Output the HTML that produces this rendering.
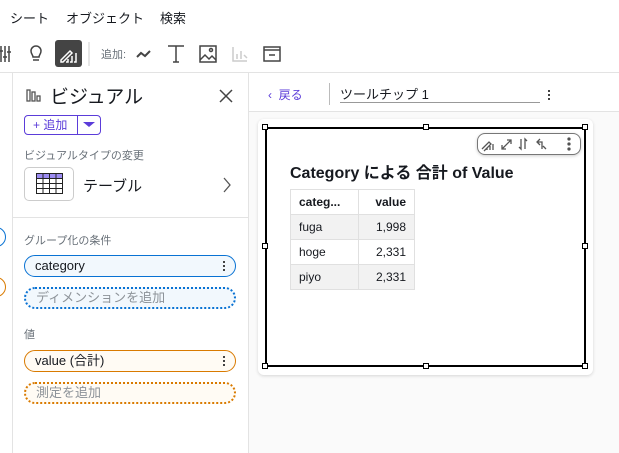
<!DOCTYPE html>
<html><head><meta charset="utf-8"><style>
*{box-sizing:border-box;margin:0;padding:0}
body{width:619px;height:453px;overflow:hidden;background:#fff;font-family:"Liberation Sans","Noto Sans CJK JP",sans-serif;color:#16191f;position:relative}
.a{position:absolute}
.menu{font-size:13px;top:8px}
.lbl{font-size:11px;color:#687078}
.pill{position:absolute;left:24px;width:212px;height:22px;border-radius:11px;font-size:13px;padding-left:10px;line-height:20px}
.k{position:absolute;right:10px;top:4px;width:2px;height:12px;background:radial-gradient(circle,#333 1px,transparent 1.2px) 0 0/2px 4px}
td{border:1px solid #e0e0e0;height:25px;font-size:12px;padding:0 8px}
.h{position:absolute;width:6px;height:6px;background:#fff;border:1px solid #000}
</style></head><body>
<div class="a menu" style="left:10px">シート</div>
<div class="a menu" style="left:66px">オブジェクト</div>
<div class="a menu" style="left:160px">検索</div>
<svg class="a" style="left:0;top:38px" width="300" height="32" fill="none" stroke="#444" stroke-width="1.5">
<path d="M1 8v16M5 8v16M9 8v16M-1 13h4M3 19h4M7 14h4"/>
<path d="M36 8a5 5 0 0 1 5 5c0 3-2 4-2 6h-6c0-2-2-3-2-6a5 5 0 0 1 5-5zM33 22h6"/>
<rect x="55" y="2" width="27" height="27" rx="3" fill="#444" stroke="none"/>
<path d="M61 22l9-9 2 2-9 9h-2zM66 24h2v-3M70 24h2v-6M74 24h2v-9" stroke="#fff"/>
<path d="M89 4v24" stroke="#ccc" stroke-width="1"/>
<path d="M137 19l4-4 4 3 5-5" stroke-width="2"/>
<path d="M168 8h16M176 8v16M173 24h6"/>
<rect x="200" y="8" width="16" height="16"/><path d="M200 22l5-5 4 4 3-3 4 4"/><circle cx="211" cy="12" r="1.5"/>
<path d="M233 9v14h14M237 21v-5M241 21v-8M244 17l3 3" stroke="#ccc"/>
<rect x="264" y="9" width="16" height="14"/><path d="M264 12h16M269 17h6"/>
</svg>
<div class="a lbl" style="left:101px;top:46px">追加:</div>
<div class="a" style="left:0;top:72px;width:619px;border-top:1px solid #e3e3e3"></div>
<div class="a" style="left:12px;top:72px;height:381px;border-left:1px solid #e3e3e3"></div>
<div class="a" style="left:248px;top:72px;height:381px;border-left:1px solid #e3e3e3"></div>
<div class="a" style="left:-16px;top:227px;width:22px;height:20px;border:1px solid #0972d3;border-radius:10px"></div>
<div class="a" style="left:-16px;top:277px;width:22px;height:20px;border:1px solid #d97a00;border-radius:10px"></div>
<svg class="a" style="left:26px;top:87px" width="16" height="16" fill="none" stroke="#555" stroke-width="1.3"><rect x="1" y="3" width="3" height="11"/><rect x="6" y="5" width="3" height="9"/><rect x="11" y="9" width="3" height="5"/></svg>
<div class="a" style="left:50px;top:82px;font-size:19px">ビジュアル</div>
<svg class="a" style="left:219px;top:89px" width="14" height="14" stroke="#444" stroke-width="1.5"><path d="M1 1l12 12M13 1L1 13"/></svg>
<div class="a" style="left:24px;top:115px;width:77px;height:20px;border:1px solid #5b3cd9;border-radius:4px;color:#5b3cd9;font-size:12px;line-height:18px;padding-left:8px">+ 追加</div>
<div class="a" style="left:77px;top:115px;height:20px;border-left:1px solid #5b3cd9"></div>
<div class="a" style="left:83px;top:122px;border:5px solid transparent;border-top:5px solid #5b3cd9;border-width:5px 6px"></div>
<div class="a lbl" style="left:24px;top:147px">ビジュアルタイプの変更</div>
<div class="a" style="left:24px;top:167px;width:50px;height:34px;border:1px solid #ccc;border-radius:5px"></div>
<svg class="a" style="left:36px;top:173px" width="27" height="21" fill="none" stroke="#222" stroke-width="1"><rect x="0.5" y="0.5" width="26" height="5" fill="#9c8cf2"/><path d="M0.5 0.5v20h26v-20M0.5 10.5h26M0.5 15.5h26M7 .5v20M13.5 .5v20M20 .5v20"/></svg>
<div class="a" style="left:83px;top:175px;font-size:15px">テーブル</div>
<svg class="a" style="left:222px;top:177px" width="10" height="16" fill="none" stroke="#555" stroke-width="1.3"><path d="M2 1l6 7-6 7"/></svg>
<div class="a" style="left:13px;top:217px;width:235px;border-top:1px solid #e3e3e3"></div>
<div class="a lbl" style="left:24px;top:232px">グループ化の条件</div>
<div class="pill" style="top:255px;border:1px solid #0972d3;background:#f2f8fd">category<span class="k"></span></div>
<div class="pill" style="top:287px;border:2px dotted #0972d3;background:#f2f8fd;color:#8d9399;line-height:18px">ディメンションを追加</div>
<div class="a lbl" style="left:24px;top:326px">値</div>
<div class="pill" style="top:350px;border:1px solid #d97a00;background:#fffbf4">value (合計)<span class="k"></span></div>
<div class="pill" style="top:382px;border:2px dotted #d97a00;background:#fffbf4;color:#8d9399;line-height:18px">測定を追加</div>
<div class="a" style="left:249px;top:111px;width:370px;height:342px;background:#fafafa;border-top:1px solid #e3e3e3"></div>
<div class="a" style="left:268px;top:86px;font-size:12px;color:#5b3cd9">‹&nbsp; 戻る</div>
<div class="a" style="left:329px;top:83px;height:22px;border-left:1px solid #bbb"></div>
<div class="a" style="left:340px;top:84px;width:200px;height:19px;border-bottom:1px solid #999;font-size:13px">ツールチップ 1</div>
<div class="a" style="left:548px;top:89px;width:2px;height:12px;background:radial-gradient(circle,#333 1px,transparent 1.2px) 0 0/2px 4px"></div>
<div class="a" style="left:258px;top:119px;width:335px;height:256px;background:#fff;border-radius:6px;box-shadow:0 1px 3px rgba(0,0,0,.15)"></div>
<div class="a" style="left:265px;top:127px;width:321px;height:240px;border:2px solid #000"></div>
<div class="h" style="left:262px;top:124px"></div><div class="h" style="left:423px;top:124px"></div><div class="h" style="left:582px;top:124px"></div>
<div class="h" style="left:262px;top:243px"></div><div class="h" style="left:582px;top:243px"></div>
<div class="h" style="left:262px;top:363px"></div><div class="h" style="left:423px;top:363px"></div><div class="h" style="left:582px;top:363px"></div>
<div class="a" style="left:477px;top:133px;width:104px;height:22px;border:1px solid #777;border-radius:8px;background:#fff;box-shadow:0 1px 3px rgba(0,0,0,.2)"></div>
<svg class="a" style="left:480px;top:136px" width="100" height="16" fill="none" stroke="#555" stroke-width="1.3"><path d="M2 13l7-7 2 2-7 7M7 14v-2M10 14v-4M13 14v-6"/><path d="M22 13l9-9M22 9v4h4M31 8v-4h-4"/><path d="M41 3v10l-2-2M45 13v-10l2 2"/><path d="M60 3l-3 3 3 3M57 6h5v7M66 13l-3-3"/><circle cx="89" cy="3" r="1" fill="#333"/><circle cx="89" cy="8" r="1" fill="#333"/><circle cx="89" cy="13" r="1" fill="#333"/></svg>
<div class="a" style="left:290px;top:159px;font-size:16px;font-weight:bold">Category による 合計 of Value</div>
<table class="a" style="left:290px;top:189px;border-collapse:collapse;width:125px">
<tr><td style="width:68px;font-weight:bold">categ...</td><td style="text-align:right;font-weight:bold">value</td></tr>
<tr style="background:#f2f2f2"><td>fuga</td><td style="text-align:right">1,998</td></tr>
<tr><td>hoge</td><td style="text-align:right">2,331</td></tr>
<tr style="background:#f2f2f2"><td>piyo</td><td style="text-align:right">2,331</td></tr>
</table>
</body></html>
